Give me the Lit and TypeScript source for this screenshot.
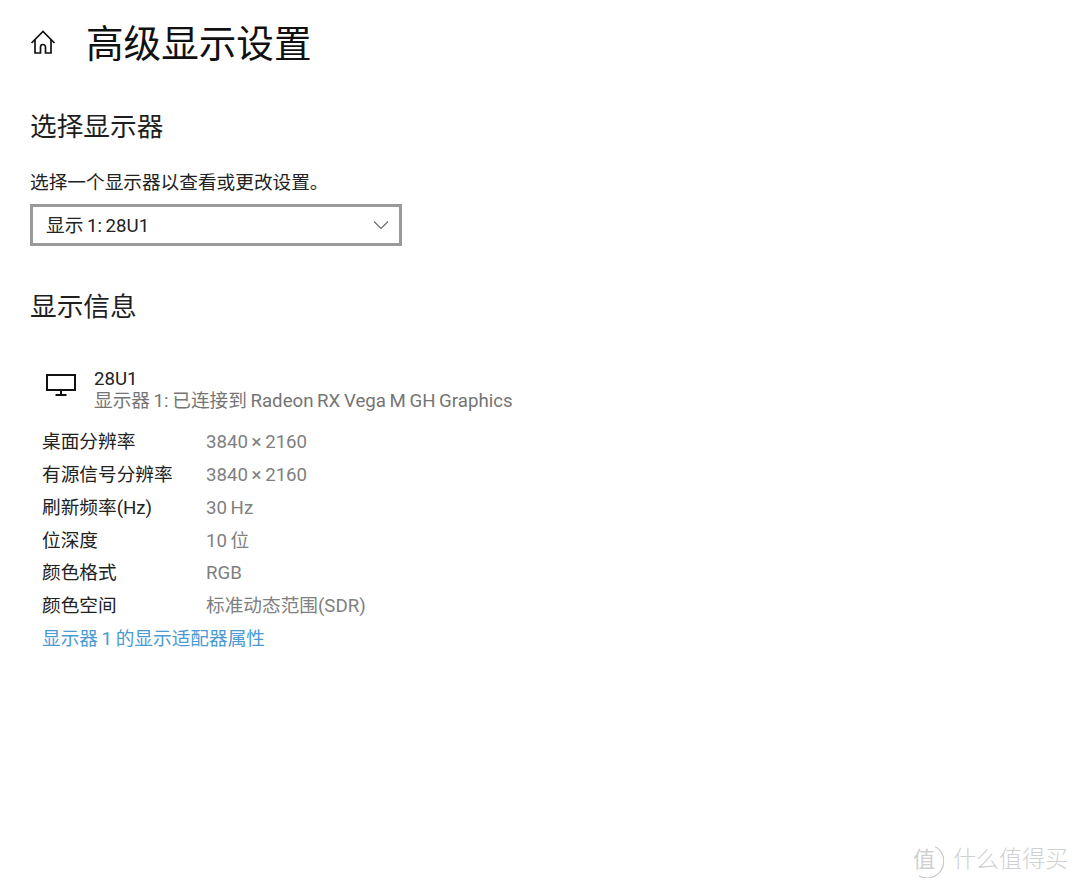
import { LitElement, html, css, svg } from "lit";
import { customElement } from "lit/decorators.js";

const rows: [string, string][] = [
  ["桌面分辨率", "3840 × 2160"],
  ["有源信号分辨率", "3840 × 2160"],
  ["刷新频率(Hz)", "30 Hz"],
  ["位深度", "10 位"],
  ["颜色格式", "RGB"],
  ["颜色空间", "标准动态范围(SDR)"],
];

@customElement("app-root")
export class AppRoot extends LitElement {
  static styles = css`
    :host {
      display: block;
      position: relative;
      width: 1080px;
      height: 885px;
      overflow: hidden;
      background: #fff;
      color: #111;
      font-family: "Roboto", "Noto Sans CJK SC", sans-serif;
      font-size: 18.67px;
      font-weight: 400;
      word-spacing: -1px;
    }
    .page {
      display: flex;
      flex-direction: column;
      padding: 19px 0 0 30px;
    }
    .top {
      display: flex;
      align-items: center;
      height: 50px;
    }
    .home {
      width: 26px;
      height: 26px;
      margin-right: 30px;
      flex: none;
      position: relative;
      top: -2px;
    }
    h1 {
      margin: 0;
      font-size: 37.6px;
      font-weight: 400;
      line-height: 50px;
      color: #111;
    }
    h2 {
      margin: 0;
      font-size: 26.7px;
      font-weight: 400;
      line-height: 36px;
      color: #1f1f1f;
    }
    .h-a { margin-top: 40px; }
    .h-b { margin-top: 43px; }
    .desc {
      margin-top: 24px;
      line-height: 28px;
      color: #222;
    }
    .select {
      margin-top: 7px;
      width: 372px;
      height: 42px;
      box-sizing: border-box;
      border: 3px solid #9a9a9a;
      display: flex;
      align-items: center;
      justify-content: space-between;
      padding: 0 10px 4px 13px;
      color: #222;
    }
    .chev { width: 16px; height: 10px; flex: none; position: relative; top: 2px; }
    .device {
      display: flex;
      margin-top: 43px;
      padding-left: 16px;
    }
    .mon { width: 30px; height: 24px; margin-top: 6px; margin-right: 18px; flex: none; }
    .name { line-height: 22px; color: #222; }
    .sub { line-height: 22px; color: #757575; }
    .props {
      display: flex;
      flex-direction: column;
      margin-top: 14px;
      padding-left: 12px;
    }
    .row {
      display: flex;
      height: 32.85px;
      line-height: 33px;
    }
    .k { width: 164px; color: #222; flex: none; }
    .v { color: #808080; }
    .link { line-height: 33px; color: #4a9ad4; }
    .mark {
      position: absolute;
      left: 913px;
      top: 845px;
      display: flex;
      align-items: flex-start;
      gap: 9px;
      color: #d0d0d0;
    }
    .badge {
      position: relative;
      width: 31px;
      height: 33px;
      font-size: 22px;
      line-height: 29px;
    }
    .arc { position: absolute; left: 0; top: 0; width: 31px; height: 33px; }
    .brand { font-size: 23px; line-height: 30px; font-weight: 300; }
  `;

  render() {
    return html`
      <div class="page">
        <div class="top">
          <svg class="home" viewBox="0 0 26 26" fill="none" stroke="#111" stroke-width="1.7">
            ${svg`<path d="M1.500 14 13 2.500 24.500 14"/><path d="M5 10.500V24h5.500v-6a2.500 2.500 0 0 1 5 0v6H21V10.500"/>`}
          </svg>
          <h1>高级显示设置</h1>
        </div>
        <h2 class="h-a">选择显示器</h2>
        <div class="desc">选择一个显示器以查看或更改设置。</div>
        <div class="select">
          <span>显示 1: 28U1</span>
          <svg class="chev" viewBox="0 0 16 10" fill="none" stroke="#666" stroke-width="1.1">
            ${svg`<path d="M1 1.500 8 8.500l7-7"/>`}
          </svg>
        </div>
        <h2 class="h-b">显示信息</h2>
        <div class="device">
          <svg class="mon" viewBox="0 0 30 24" fill="none" stroke="#111" stroke-width="2">
            ${svg`<rect x="1" y="1" width="28" height="15"/><path d="M15 17v3.500M9.500 21h11"/>`}
          </svg>
          <div>
            <div class="name">28U1</div>
            <div class="sub">显示器 1: 已连接到 Radeon RX Vega M GH Graphics</div>
          </div>
        </div>
        <div class="props">
          ${rows.map(
            ([k, v]) => html`<div class="row"><span class="k">${k}</span><span class="v">${v}</span></div>`
          )}
          <div class="link">显示器 1 的显示适配器属性</div>
        </div>
      </div>
      <div class="mark">
        <span class="badge">值
          <svg class="arc" viewBox="0 0 31 33" fill="none" stroke="#c8c8c8" stroke-width="1.2">
            ${svg`<path d="M22 1.500A15.500 15.500 0 0 1 6 31"/>`}
          </svg>
        </span>
        <span class="brand">什么值得买</span>
      </div>
    `;
  }
}
